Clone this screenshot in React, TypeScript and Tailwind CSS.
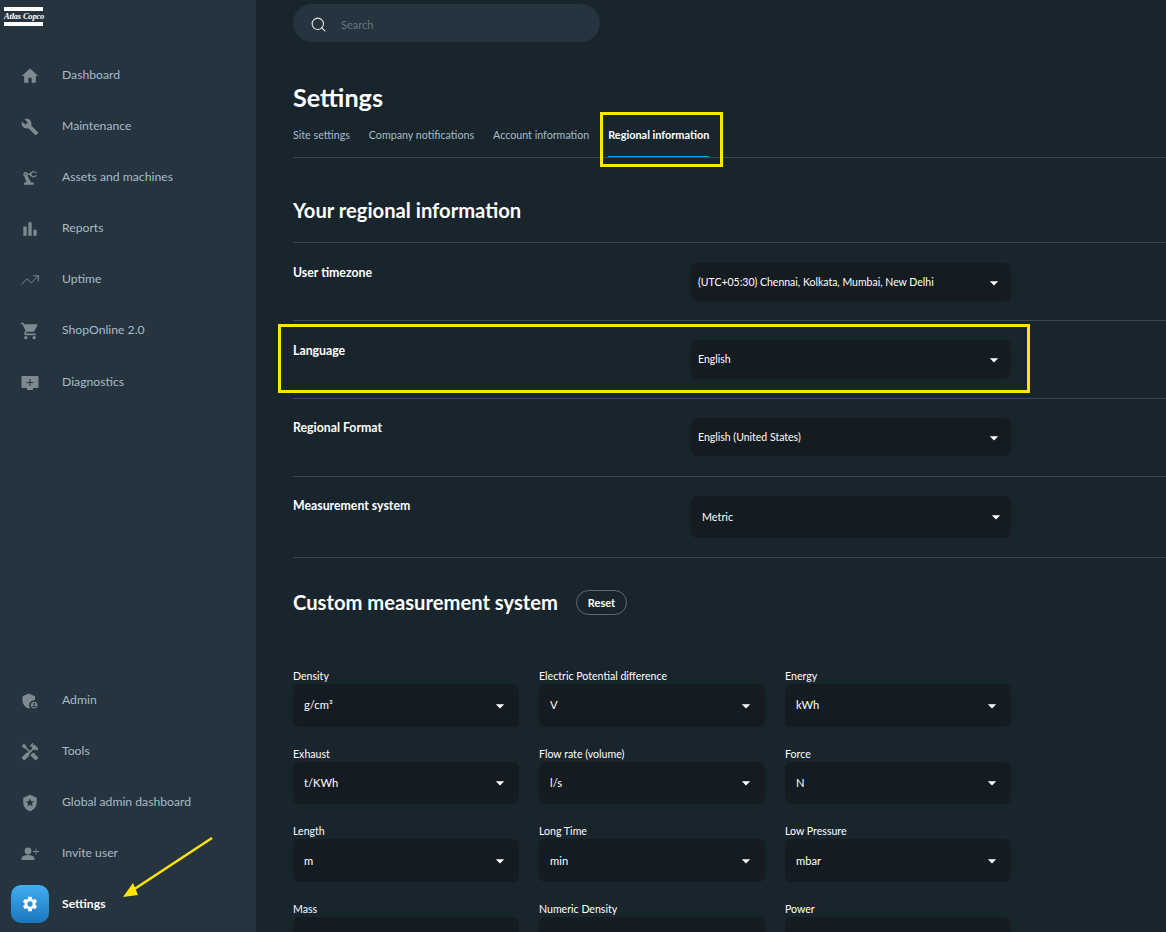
import type { ReactNode } from "react";
import { Search, TrendingUp } from "lucide-react";
import {
  MdHome,
  MdBuild,
  MdPrecisionManufacturing,
  MdBarChart,
  MdShoppingCart,
  MdAdminPanelSettings,
  MdHandyman,
  MdLocalPolice,
  MdSettings,
  MdArrowDropDown,
} from "react-icons/md";

// Filled monitor with a plus, the icon package one only has an outline
const DiagnosticsIcon = () => (
  <svg width="1em" height="1em" viewBox="0 0 20 20" fill="currentColor">
    <path d="M2.5 3h15a1 1 0 0 1 1 1v10a1 1 0 0 1-1 1H13v2H7v-2H2.5a1 1 0 0 1-1-1V4a1 1 0 0 1 1-1z" />
    <path d="M9.5 6h1v3h3v1h-3v3h-1v-3h-3V9h3z" fill="#25343f" />
  </svg>
);

// Person with a thin plus
const InviteIcon = () => (
  <svg width="1em" height="1em" viewBox="0 0 20 20" fill="currentColor">
    <circle cx="8" cy="7" r="3.4" />
    <path d="M1.5 16v-1.6c0-2.2 4.3-3.3 6.5-3.3s6.5 1.1 6.5 3.3V16z" />
    <path d="M15.6 4.500h.8v2.6H19v.8h-2.6v2.6h-.8V7.900h-2.6v-.8h2.600z" />
  </svg>
);

const topNav = [
  { label: "Dashboard", icon: <MdHome /> },
  { label: "Maintenance", icon: <MdBuild className="text-[18px]" /> },
  { label: "Assets and machines", icon: <MdPrecisionManufacturing className="text-[18px]" /> },
  { label: "Reports", icon: <MdBarChart /> },
  { label: "Uptime", icon: <TrendingUp size={20} strokeWidth={1.2} /> },
  { label: "ShopOnline 2.0", icon: <MdShoppingCart /> },
  { label: "Diagnostics", icon: <DiagnosticsIcon /> },
];

const bottomNav = [
  { label: "Admin", icon: <MdAdminPanelSettings /> },
  { label: "Tools", icon: <MdHandyman /> },
  { label: "Global admin dashboard", icon: <MdLocalPolice className="text-[18px]" /> },
  { label: "Invite user", icon: <InviteIcon /> },
];

const tabs = ["Site settings", "Company notifications", "Account information"];

const regional = [
  { label: "User timezone", value: "(UTC+05:30) Chennai, Kolkata, Mumbai, New Delhi", title: "mt-[21px]", box: "mt-[20px] h-[38px] pt-px" },
  { label: "Language", value: "English", title: "mt-[21px]", box: "mt-[19px] h-[39px]" },
  { label: "Regional Format", value: "English (United States)", title: "mt-[20px]", box: "mt-[19px] h-[38px] pt-px" },
];

const units: { label: string; value: ReactNode }[] = [
  { label: "Density", value: <>g/cm³</> },
  { label: "Electric Potential difference", value: "V" },
  { label: "Energy", value: "kWh" },
  { label: "Exhaust", value: "t/KWh" },
  { label: "Flow rate (volume)", value: "l/s" },
  { label: "Force", value: "N" },
  { label: "Length", value: "m" },
  { label: "Long Time", value: "min" },
  { label: "Low Pressure", value: "mbar" },
  { label: "Mass", value: "" },
  { label: "Numeric Density", value: "" },
  { label: "Power", value: "" },
];

function NavRow({ label, icon }: { label: string; icon: ReactNode }) {
  return (
    <div className="flex h-[51px] items-center last:mt-px">
      <span className="flex w-[62px] justify-center pr-[2px] text-[20px] text-[#7d8a92]">{icon}</span>
      <span className="text-[12.2px] text-[#a9bcc8]">{label}</span>
    </div>
  );
}

export default function App() {
  return (
    <div className="relative flex h-[932px] overflow-hidden bg-[#18252d] font-['Lato',sans-serif] text-white">
      {/* Sidebar */}
      <aside className="flex w-[256px] shrink-0 flex-col justify-between bg-[#25343f] pb-[2px]">
        <div>
          <div className="h-[50px] pl-[4px] pt-[7px]">
            <div className="flex h-[19px] w-[39px] flex-col justify-between">
              <div className="h-[4px] bg-white" />
              <div className="whitespace-nowrap text-center font-['Liberation_Serif',serif] text-[8.5px] leading-[9px] font-bold italic tracking-[-0.2px]">
                Atlas Copco
              </div>
              <div className="h-[4px] bg-white" />
            </div>
          </div>
          {topNav.map((item) => (
            <NavRow key={item.label} {...item} />
          ))}
        </div>
        <div>
          {bottomNav.map((item) => (
            <NavRow key={item.label} {...item} />
          ))}
          <div className="flex h-[51px] items-center">
            <span className="-mt-[2px] ml-[11px] mr-[13px] flex h-[38px] w-[38px] items-center justify-center rounded-[10px] bg-gradient-to-b from-[#42aef2] to-[#1a76bd] text-[18px]">
              <MdSettings />
            </span>
            <span className="text-[12.2px] font-bold">Settings</span>
          </div>
        </div>
      </aside>

      {/* Main */}
      <main className="min-w-0 flex-1 pl-[37px] pt-[4px]">
        <div className="flex h-[38px] w-[307px] items-center rounded-full bg-[#25343f] pl-[17px] pt-[2px]">
          <Search size={17} strokeWidth={1.5} className="text-[#e3e8eb]" />
          <span className="ml-[14px] mt-[2px] text-[11px] text-[#66747c]">Search</span>
        </div>

        <h1 className="mt-[37px] h-[36px] text-[25.2px] leading-[36px] font-bold">Settings</h1>

        <div className="mt-[6px] flex h-[37px] gap-[19px] border-b border-[#3a474f]">
          {tabs.map((tab) => (
            <span key={tab} className="pt-[6px] text-[10.7px] leading-[16px] text-[#a9bcc8]">
              {tab}
            </span>
          ))}
          <span className="border-b border-[#18a0ea] pt-[6px] text-[10.9px] leading-[16px] font-bold">
            Regional information
          </span>
        </div>

        <h2 className="mt-[36px] h-[32px] text-[20.2px] leading-[32px] font-bold">Your regional information</h2>

        <div className="mt-[16px]">
          {regional.map((row) => (
            <div key={row.label} className="flex h-[78px] border-t border-[#3a474f]">
              <span className={`${row.title} w-[398px] text-[12.3px] leading-[18px] font-bold`}>{row.label}</span>
              <div className={`${row.box} flex w-[320px] items-center justify-between rounded-[6px] bg-[#141c22] pl-[7px] pr-[7px] text-[10.5px]`}>
                {row.value}
                <MdArrowDropDown className="text-[20px]" />
              </div>
            </div>
          ))}
          <div className="flex h-[82px] border-y border-[#3a474f] pt-[19px]">
            <span className="mt-[1px] w-[398px] text-[12.3px] leading-[18px] font-bold">Measurement system</span>
            <div className="flex h-[42px] w-[320px] items-center justify-between rounded-[6px] bg-[#141c22] pl-[11px] pr-[5px] text-[10.8px]">
              Metric
              <MdArrowDropDown className="text-[20px]" />
            </div>
          </div>
        </div>

        <div className="mt-[30px] flex items-center">
          <h2 className="h-[28px] text-[20.2px] leading-[28px] font-bold">Custom measurement system</h2>
          <span className="ml-[18px] mt-[1px] flex h-[25px] w-[51px] items-center justify-center rounded-full border border-[#5c6a72] pt-[1px] text-[11px] font-bold">
            Reset
          </span>
        </div>

        <div className="mt-[52px] grid w-[718px] grid-cols-3 gap-x-[20px] gap-y-[19px]">
          {units.map((u) => (
            <div key={u.label}>
              <div className="h-[16px] text-[10.6px] leading-[16px]">{u.label}</div>
              <div className="flex h-[42.67px] items-center justify-between rounded-[6px] bg-[#141c22] pl-[11px] pr-[9px] pt-px text-[11.2px]">
                {u.value}
                <MdArrowDropDown className="text-[20px]" />
              </div>
            </div>
          ))}
        </div>
      </main>

      {/* Annotations */}
      <div className="absolute left-[600px] top-[112px] h-[55px] w-[123px] border-[3px] border-[#ffe600]" />
      <div className="absolute left-[278px] top-[324px] h-[69px] w-[752px] border-[3px] border-[#ffe600]" />
      <svg className="absolute left-[120px] top-[830px]" width="100" height="70" viewBox="0 0 100 70">
        <line x1="92" y1="8" x2="13" y2="60" stroke="#ffe600" strokeWidth="2.5" />
        <polygon points="3,67 13,53 18,65" fill="#ffe600" />
      </svg>
    </div>
  );
}
